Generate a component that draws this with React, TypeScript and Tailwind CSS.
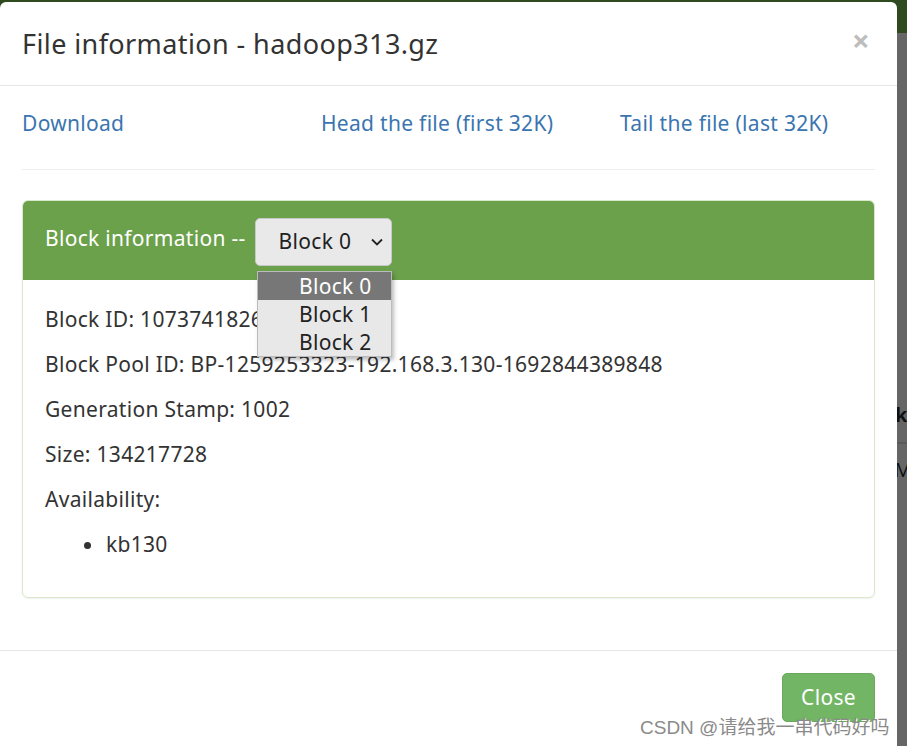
import React from "react";

const font = { fontFamily: '"Noto Sans", "Open Sans", Arial, "Noto Sans CJK SC", sans-serif' };

export default function App() {
  return (
    <div className="relative w-[907px] h-[746px] overflow-hidden bg-[#666666]" style={font}>
      {/* underlying page (darkened by backdrop) */}
      <div className="h-[33px] bg-[#2f4a1f]" />
      <div className="absolute left-[895px] top-[400px] text-[20px] font-bold text-[#111]">k</div>
      <div className="absolute left-[897px] top-[442px] w-[10px] h-[2px] bg-[#5a5a5a]" />
      <div className="absolute left-[894px] top-[455px] text-[20px] text-[#111]">M</div>

      {/* modal */}
      <div className="absolute left-0 top-[2px] w-[897px] h-[760px] bg-white rounded-[6px] flex flex-col text-[21px] text-[#333333] tracking-[0.3px]">
        <div className="h-[84px] border-b-[1.5px] border-[#e5e5e5] flex items-center justify-between px-[22px]">
          <h4 className="text-[27px] leading-[38px] mt-[1px] tracking-[0.4px]">File information - hadoop313.gz</h4>
          <span className="text-[31px] font-bold text-[#bdbdbd] leading-none mr-[5px] -mt-[6px]">×</span>
        </div>
        <div className="px-[22px] pt-[22px] pb-[22px]">
          <div className="grid grid-cols-[299px_299px_1fr] h-[32px] items-center text-[#3a75b0]">
            <span>Download</span>
            <span>Head the file (first 32K)</span>
            <span>Tail the file (last 32K)</span>
          </div>
          <div className="mt-[29px] mb-[30px] border-t-[1.5px] border-[#eeeeee]" />
          <div className="border-[1.5px] border-[#d9e8c8] rounded-[6px] shadow-[0_1px_2px_rgba(0,0,0,0.06)]">
            <div className="relative h-[79px] bg-[#6ba14b] rounded-t-[5px] flex items-center pl-[22px] text-white">
              <span className="-mt-[4px]">Block information --</span>
              <div className="ml-[9px] mt-[2px] w-[137px] h-[48px] rounded-[5px] border border-[#c8c8c8] bg-[#e9e9e9] text-[#222] flex items-center justify-between pl-[23px] pr-[7px]">
                <span>Block 0</span>
                <svg width="14" height="10" viewBox="0 0 14 10"><path d="M2 2.5 L7 7.5 L12 2.5" fill="none" stroke="#222" strokeWidth="1.8" /></svg>
              </div>
              <div className="absolute left-[234px] top-[70px] w-[135px] border border-[#bcbcbc] bg-[#e8e8e8] shadow-[2px_3px_4px_rgba(0,0,0,0.25)] z-10 text-[21px] leading-[28px]">
                <div className="bg-[#777777] text-white pl-[41px]">Block 0</div>
                <div className="text-[#222] pl-[41px]">Block 1</div>
                <div className="text-[#222] pl-[41px]">Block 2</div>
              </div>
            </div>
            <div className="px-[22px] pt-[24px] pb-[23px] leading-[30px]">
              <p className="mb-[15px]">Block ID: 1073741826</p>
              <p className="mb-[15px]">Block Pool ID: BP-1259253323-192.168.3.130-1692844389848</p>
              <p className="mb-[15px]">Generation Stamp: 1002</p>
              <p className="mb-[15px]">Size: 134217728</p>
              <p className="mb-[15px]">Availability:</p>
              <ul className="pl-[60px] list-disc mb-[15px]">
                <li className="pl-[1px]">kb130</li>
              </ul>
            </div>
          </div>
        </div>
        <div className="mt-[30px] border-t-[1.5px] border-[#e5e5e5] px-[22px] pt-[22px] flex justify-end">
          <div className="w-[93px] h-[49px] rounded-[5px] bg-[#72b564] border border-[#6aa95c] text-white flex items-center justify-center">Close</div>
        </div>
      </div>

      <div className="absolute left-[640px] top-[714px] text-[19px] text-[#8a8a8a] [text-shadow:1px_1px_0_#ffffff]" style={{ fontFamily: '"Liberation Sans", "Noto Sans CJK SC", sans-serif' }}>
        CSDN @请给我一串代码好吗
      </div>
    </div>
  );
}
